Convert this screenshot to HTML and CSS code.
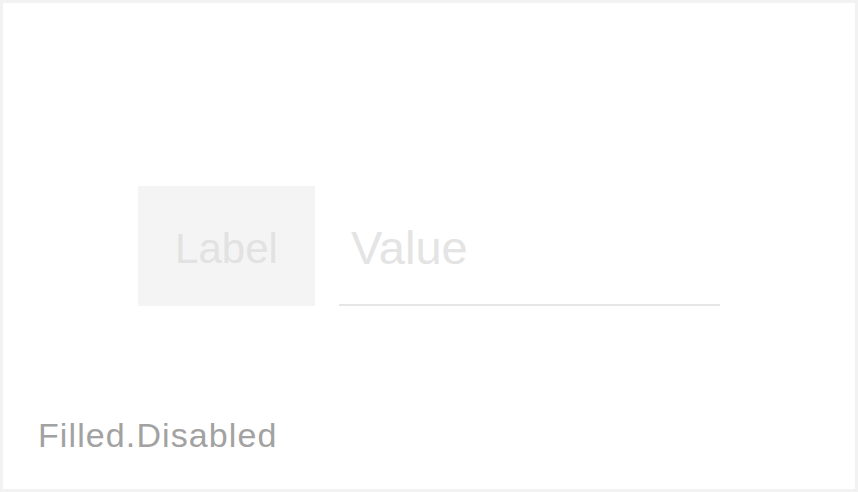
FILE: index.html
```html
<!DOCTYPE html>
<html lang="en">
<head>
<meta charset="utf-8">
<title>Filled.Disabled</title>
<link rel="stylesheet" href="styles.css">
</head>
<body>
<div class="frame">
  <div class="row">
    <div class="label-box">Label</div>
    <div class="field"><span class="value">Value</span></div>
  </div>
  <div class="caption">Filled.Disabled</div>
</div>
</body>
</html>
```
FILE: styles.css
```css
html, body {
  margin: 0;
  padding: 0;
  background: #ffffff;
}
.frame {
  width: 858px;
  height: 492px;
  box-sizing: border-box;
  border: 3px solid #f2f2f2;
  display: flex;
  flex-direction: column;
  font-family: "Liberation Sans", Arial, sans-serif;
}
.row {
  display: flex;
  gap: 24px;
  padding: 183px 0 0 135px;
}
.label-box {
  width: 177px;
  height: 120px;
  box-sizing: border-box;
  background: #f4f4f4;
  color: #e2e2e2;
  font-size: 42px;
  line-height: 42px;
  padding-top: 42px;
  text-align: center;
}
.field {
  width: 381px;
  height: 120px;
  box-sizing: border-box;
  border-bottom: 2px solid #e6e6e6;
  padding: 39px 0 0 12px;
  font-size: 47px;
  line-height: 46px;
  color: #e4e4e4;
}
.caption {
  margin-top: auto;
  padding: 0 0 37px 35px;
  font-size: 34px;
  line-height: 34px;
  letter-spacing: 1.1px;
  color: #a2a2a2;
}
```
